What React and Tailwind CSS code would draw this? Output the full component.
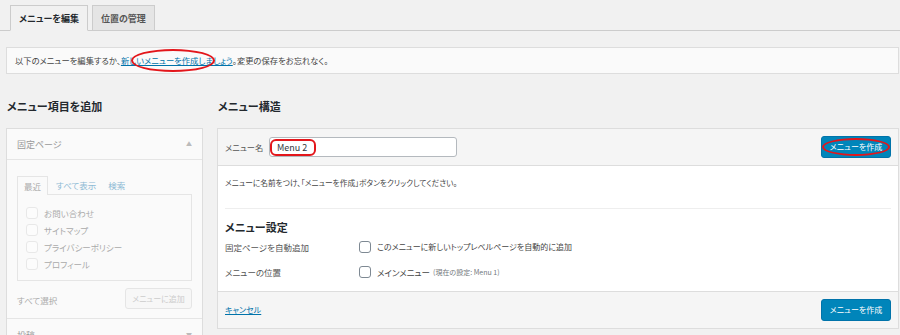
export default function App() {
    return (
        <div className="w-[900px] h-[335px] overflow-hidden bg-[#f1f1f1] text-[#444] [font-family:'Noto_Sans_CJK_JP','Noto_Sans',sans-serif] [font-feature-settings:'palt'] leading-none">
            {/* Tabs */}
            <div className="flex items-end gap-[4px] pl-[10px] pt-[5px] border-b border-[#ccc] h-[31px]">
                <div className="-mb-px h-[26px] px-[8px] flex items-center bg-[#f1f1f1] border border-[#ccc] border-b-[#f1f1f1] text-[9px] font-bold text-[#23282d]">
                    メニューを編集
                </div>
                <div className="-mb-px h-[26px] px-[8px] flex items-center bg-[#e5e5e5] border border-[#ccc] text-[9px] font-bold text-[#555]">
                    位置の管理
                </div>
            </div>

            {/* Notice */}
            <div className="relative mt-[16px] ml-[6px] mr-px h-[27px] bg-[#fafafa] border border-[#ddd] flex items-center px-[8px] text-[8.3px] text-[#444]">
                以下のメニューを編集するか、
                <span className="text-[#0073aa] underline">新しいメニューを作成しましょう</span>
                。変更の保存をお忘れなく。
                <span className="absolute left-[124px] top-[1px] w-[84px] h-[23px] border-2 border-[#e3161b] rounded-[50%]"></span>
            </div>

            {/* Columns */}
            <div className="flex gap-[14px] ml-[6px] mr-px mt-[27px]">
                {/* Left column */}
                <div className="w-[197px] shrink-0">
                    <h2 className="pl-px h-[17px] text-[11px] font-bold text-[#23282d]">メニュー項目を追加</h2>
                    <div className="mt-[10px] border border-[#ddd] bg-[#fafafa]">
                        <div className="h-[31px] flex items-center justify-between px-[10px] border-b border-[#e5e5e5] text-[9px] text-[#999]">
                            <span>固定ページ</span>
                            <span className="text-[6px] text-[#bbb]">▲</span>
                        </div>
                        <div className="px-[10px] pt-[16px] text-[8.5px]">
                            <div className="flex items-end h-[19px]">
                                <div className="h-[19px] px-[6px] flex items-center border border-b-0 border-[#e5e5e5] bg-[#fafafa] text-[#aaa]">最近</div>
                                <div className="h-[19px] px-[8px] flex items-center text-[#8cb9d4]">すべて表示</div>
                                <div className="h-[19px] px-[4px] flex items-center text-[#8cb9d4]">検索</div>
                            </div>
                            <div className="h-[87px] border border-[#e5e5e5] -mt-px pt-[12px] pl-[8px] flex flex-col gap-[5px] text-[#aaa]">
                                {["お問い合わせ", "サイトマップ", "プライバシーポリシー", "プロフィール"].map((t) => (
                                    <div key={t} className="flex items-center gap-[6px] h-[12px]">
                                        <span className="w-[12px] h-[12px] rounded-[3px] border border-[#e8e8e8] bg-[#fcfcfc]"></span>
                                        <span>{t}</span>
                                    </div>
                                ))}
                            </div>
                            <div className="flex items-center justify-between h-[37px] pb-[2px]">
                                <span className="text-[#aaa] pt-[4px]">すべて選択</span>
                                <span className="h-[21px] w-[67px] flex items-center justify-center rounded-[3px] border border-[#e5e5e5] bg-[#f7f7f7] text-[#ccc] text-[8px]">メニューに追加</span>
                            </div>
                        </div>
                        <div className="h-[20px] border-t border-[#e5e5e5] flex items-end justify-between px-[10px] text-[9px] text-[#999]">
                            <span className="translate-y-[2px]">投稿</span>
                            <span className="text-[6px] text-[#bbb]">▼</span>
                        </div>
                    </div>
                </div>

                {/* Right column */}
                <div className="flex-1">
                    <h2 className="pl-px h-[17px] text-[11px] font-bold text-[#23282d]">メニュー構造</h2>
                    <div className="mt-[10px] border border-[#ddd] bg-white">
                        <div className="relative h-[37px] bg-[#f5f5f5] border-b border-[#ddd] flex items-center px-[7px] text-[8.3px] text-[#555]">
                            <span className="w-[44px]">メニュー名</span>
                            <div className="w-[188px] h-[20px] rounded-[3px] border border-[#b4b9be] bg-white flex items-center pl-[7px] text-[9px] text-[#32373c]">
                                Menu 2
                            </div>
                            <span className="absolute left-[52px] top-[10px] w-[46px] h-[17px] border-2 border-[#e3161b] rounded-[6px]"></span>
                            <span className="ml-auto w-[70px] h-[22px] rounded-[3px] bg-[#0085ba] border border-[#0073aa] text-white text-[8px] flex items-center justify-center">
                                メニューを作成
                            </span>
                            <span className="absolute right-[8px] top-[9px] w-[68px] h-[18px] border-2 border-[#e3161b] rounded-[50%]"></span>
                        </div>
                        <div className="px-[7px]">
                            <p className="h-[43px] pt-[13px] text-[7.7px] text-[#444] border-b border-[#eee]">
                                メニューに名前をつけ、「メニューを作成」ボタンをクリックしてください。
                            </p>
                            <h3 className="mt-[13px] text-[11px] font-bold text-[#23282d]">メニュー設定</h3>
                            <div className="mt-[8px] flex flex-col gap-[13px] text-[8.5px] text-[#555]">
                                <div className="flex items-center h-[12px]">
                                    <span className="w-[134px]">固定ページを自動追加</span>
                                    <span className="w-[12px] h-[12px] rounded-[3px] border border-[#7e8993] bg-white"></span>
                                    <span className="ml-[6px] text-[8px] text-[#444]">このメニューに新しいトップレベルページを自動的に追加</span>
                                </div>
                                <div className="flex items-center h-[12px]">
                                    <span className="w-[134px]">メニューの位置</span>
                                    <span className="w-[12px] h-[12px] rounded-[3px] border border-[#7e8993] bg-white"></span>
                                    <span className="ml-[6px] text-[#444]">メインメニュー</span>
                                    <span className="ml-[3px] text-[7px] text-[#72777c]">(現在の設定: Menu 1)</span>
                                </div>
                            </div>
                        </div>
                        <div className="mt-[13px] h-[37px] bg-[#f5f5f5] border-t border-[#ddd] flex items-center justify-between px-[7px]">
                            <span className="text-[8px] text-[#0073aa] underline">キャンセル</span>
                            <span className="w-[70px] h-[22px] rounded-[3px] bg-[#0085ba] border border-[#0073aa] text-white text-[8px] flex items-center justify-center">
                                メニューを作成
                            </span>
                        </div>
                    </div>
                </div>
            </div>
        </div>
    );
}
